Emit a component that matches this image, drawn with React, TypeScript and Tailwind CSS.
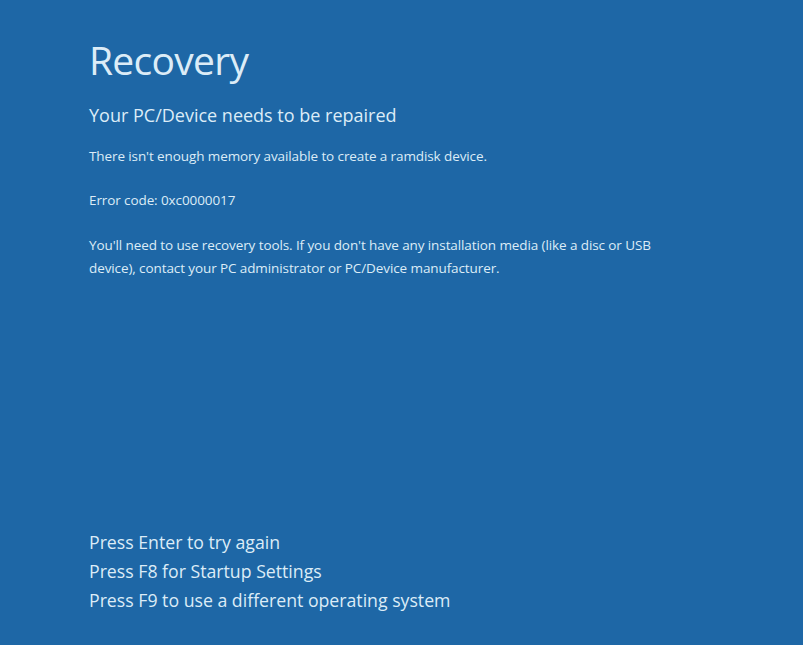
export default function App() {
  return (
    <div
      className="h-screen w-full bg-[#1e67a6] text-[#dcecf7] flex flex-col pl-[89px] pr-6 overflow-hidden"
      style={{ fontFamily: '"Open Sans", "Noto Sans", sans-serif' }}
    >
      <div className="pt-[32px]">
        <h1 className="text-[39px] leading-[56px] tracking-[-0.7px]">Recovery</h1>
        <h2 className="mt-[14px] text-[18px] leading-[26px]">Your PC/Device needs to be repaired</h2>
        <p className="mt-[20px] text-[13.5px] leading-[17px] tracking-[-0.1px]">
          There isn't enough memory available to create a ramdisk device.
        </p>
        <p className="mt-[27px] text-[13.5px] leading-[17px] tracking-[-0.1px]">Error code: 0xc0000017</p>
        <p className="mt-[25px] text-[13.5px] leading-[23px] tracking-[-0.1px] max-w-[580px]">
          You'll need to use recovery tools. If you don't have any installation media (like a disc or USB
          device), contact your PC administrator or PC/Device manufacturer.
        </p>
      </div>
      <div className="mt-auto pb-[30px] text-[17.7px] leading-[29px]">
        <div>Press Enter to try again</div>
        <div>Press F8 for Startup Settings</div>
        <div>Press F9 to use a different operating system</div>
      </div>
    </div>
  );
}
